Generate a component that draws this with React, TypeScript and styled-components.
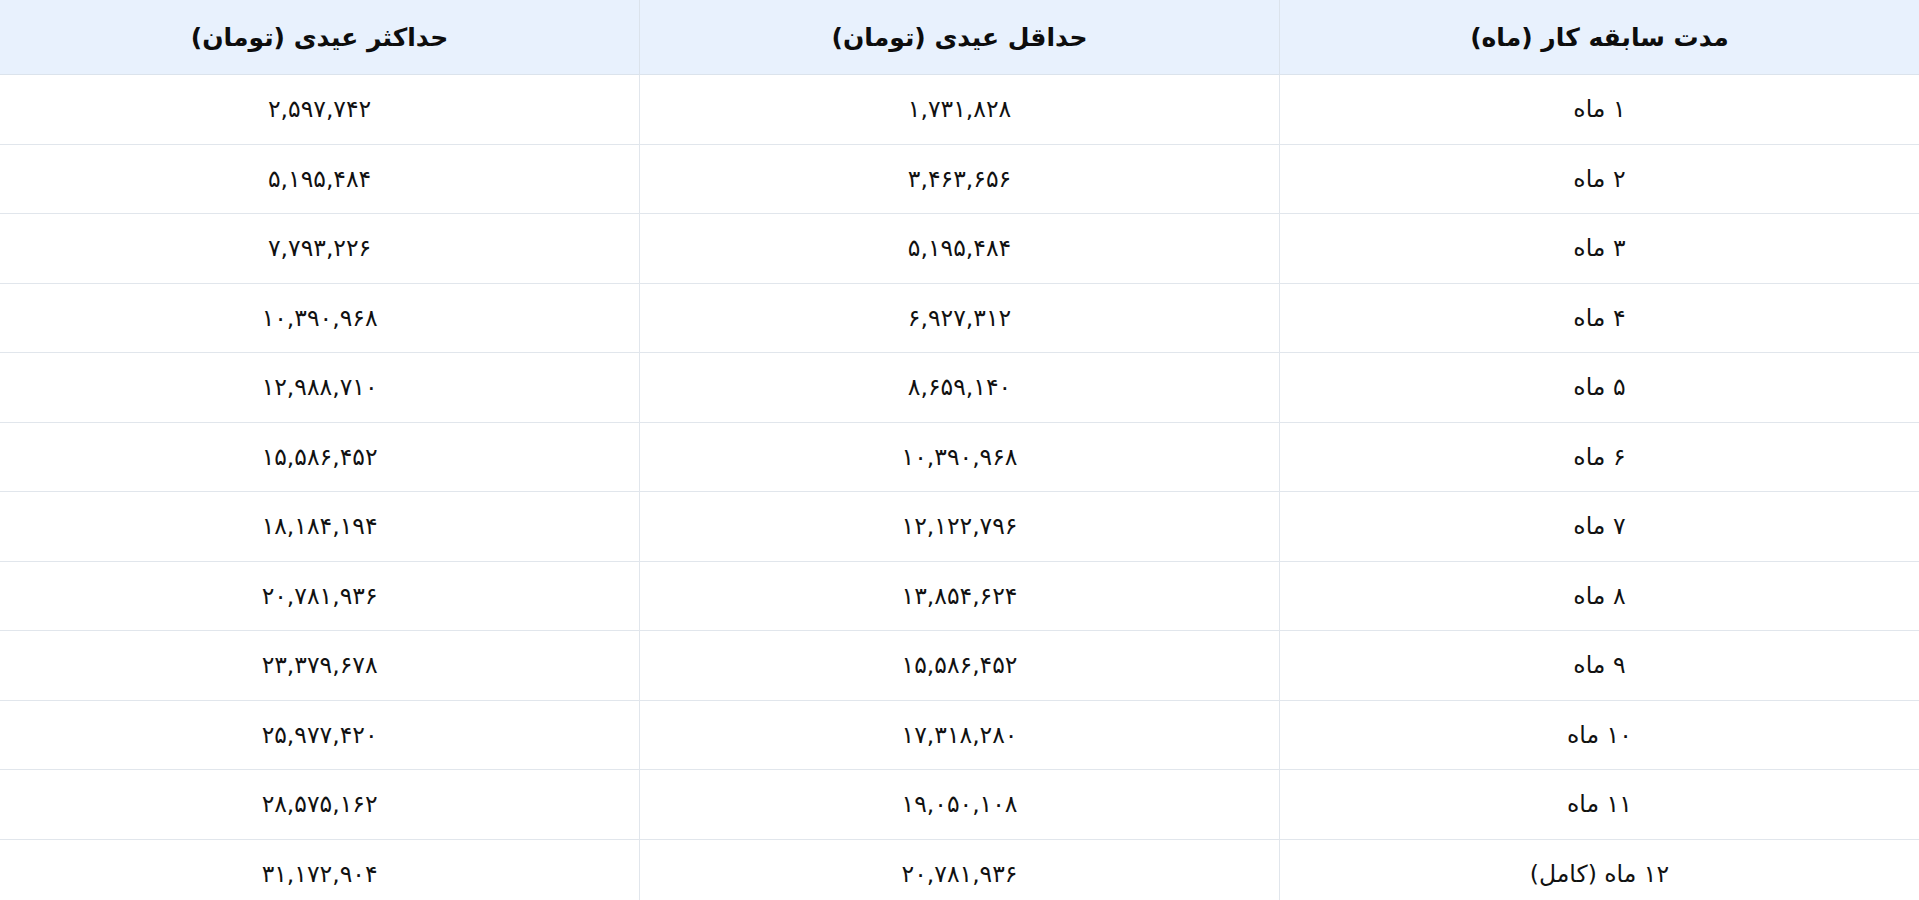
import React from "react";
import styled, { createGlobalStyle } from "styled-components";

const GlobalStyle = createGlobalStyle`
  html, body {
    margin: 0;
    padding: 0;
    background: #ffffff;
  }
  body {
    font-family: "DejaVu Sans", "Noto Sans", sans-serif;
    color: #111111;
  }
`;

const MIN_MONTHLY = 1731828;
const MAX_MONTHLY = 2597742;

// اعداد لاتین به فارسی
const toFa = (n: number | string) =>
  String(n).replace(/\d/g, (d) => "۰۱۲۳۴۵۶۷۸۹"[Number(d)]);

const money = (n: number) => toFa(n.toLocaleString("en-US"));

interface RowData {
  month: number;
  min: number;
  max: number;
}

const rows: RowData[] = Array.from({ length: 12 }, (_, i) => ({
  month: i + 1,
  min: MIN_MONTHLY * (i + 1),
  max: MAX_MONTHLY * (i + 1),
}));

function App() {
  return (
    <>
      <GlobalStyle />
      <Table dir="rtl">
        <thead>
          <tr>
            <HeadCell>مدت سابقه کار (ماه)</HeadCell>
            <HeadCell>حداقل عیدی (تومان)</HeadCell>
            <HeadCell>حداکثر عیدی (تومان)</HeadCell>
          </tr>
        </thead>
        <tbody>
          {rows.map((row) => (
            <tr key={row.month}>
              <Cell>
                {toFa(row.month)} ماه{row.month === 12 ? " (کامل)" : ""}
              </Cell>
              <Cell>{money(row.min)}</Cell>
              <Cell>{money(row.max)}</Cell>
            </tr>
          ))}
        </tbody>
      </Table>
    </>
  );
}

export default App;

const Table = styled.table`
  width: 100%;
  border-collapse: collapse;
  table-layout: fixed;
  direction: rtl;
`;

const HeadCell = styled.th`
  height: 74px;
  padding: 0 12px;
  background: #e8f1fd;
  border: 1px solid #dbe3ec;
  border-top: none;
  font-size: 25px;
  font-weight: 700;
  text-align: center;
  color: #0d0d0d;

  &:first-child {
    border-right: none;
  }
  &:last-child {
    border-left: none;
  }
`;

const Cell = styled.td`
  height: 68.5px;
  padding: 0 12px;
  border: 1px solid #e1e6ec;
  font-size: 23.5px;
  text-align: center;
  color: #111111;

  &:first-child {
    border-right: none;
  }
  &:last-child {
    border-left: none;
  }
`;
